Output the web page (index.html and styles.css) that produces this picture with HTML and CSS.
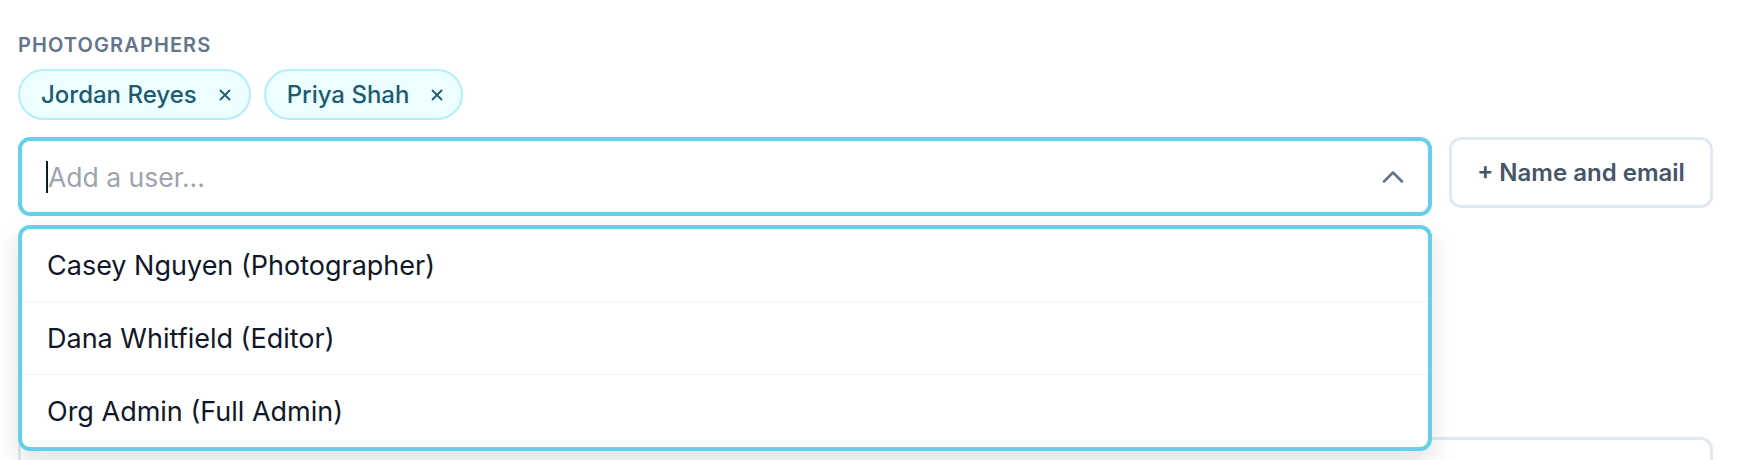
FILE: index.html
```html
<!DOCTYPE html>
<html lang="en">

<head>
    <meta charset="UTF-8">
    <meta name="viewport" content="width=device-width, initial-scale=1.0">
    <title>Photographers</title>
    <link rel="stylesheet" href="styles.css">
</head>

<body>
    <div class="field">
        <div class="label">Photographers</div>

        <div class="chips">
            <span class="chip">Jordan Reyes
                <svg class="chip-x" width="12" height="12" viewBox="0 0 12 12"><path d="M1.5 1.5l9 9M10.5 1.5l-9 9" /></svg>
            </span>
            <span class="chip">Priya Shah
                <svg class="chip-x" width="12" height="12" viewBox="0 0 12 12"><path d="M1.5 1.5l9 9M10.5 1.5l-9 9" /></svg>
            </span>
        </div>

        <div class="row">
            <div class="combo">
                <div class="input">
                    <span class="caret"></span>
                    <span class="placeholder">Add a user...</span>
                    <svg class="chevron" width="24" height="14" viewBox="0 0 24 14"><polyline points="3,11.5 12,2.5 21,11.5" /></svg>
                </div>
                <!-- open list of matching users -->
                <ul class="menu">
                    <li>Casey Nguyen (Photographer)</li>
                    <li>Dana Whitfield (Editor)</li>
                    <li>Org Admin (Full Admin)</li>
                </ul>
            </div>
            <button class="btn">+ Name and email</button>
        </div>

        <div class="box"></div>
    </div>
</body>

</html>
```

FILE: styles.css
```css
* {
    margin: 0;
    padding: 0;
    box-sizing: border-box;
}

body {
    font-family: Inter, "Noto Sans", sans-serif;
    background: #fff;
}

.field {
    width: 1713px;
    padding: 33px 0 0 18px;
}

.label {
    font-size: 20px;
    line-height: 24px;
    font-weight: 600;
    letter-spacing: 0.055em;
    text-transform: uppercase;
    color: #64748b;
    margin-bottom: 12px;
}

.chips {
    display: flex;
    gap: 13px;
    margin-bottom: 17px;
}

.chip {
    display: flex;
    align-items: center;
    gap: 22px;
    height: 51px;
    padding: 0 18px 0 21px;
    border: 2px solid #b4eefa;
    border-radius: 999px;
    background: #ecfeff;
    color: #1e5b70;
    font-size: 24px;
    font-weight: 500;
}

.chip-x {
    fill: none;
    stroke: #1e5b70;
    stroke-width: 1.8;
    stroke-linecap: round;
}

.row {
    display: flex;
    align-items: flex-start;
    gap: 17px;
}

.combo {
    flex: 1;
    position: relative;
}

.input {
    display: flex;
    align-items: center;
    height: 79px;
    padding: 0 23px 0 24px;
    border: 4px solid #64d0ea;
    border-radius: 12px;
    background: #fff;
}

.caret {
    width: 2px;
    height: 32px;
    background: #0f172a;
}

.placeholder {
    flex: 1;
    font-size: 26.5px;
    color: #9ca3af;
}

.chevron {
    fill: none;
    stroke: #64748b;
    stroke-width: 2.6;
    stroke-linecap: round;
    stroke-linejoin: round;
}

.menu {
    list-style: none;
    position: absolute;
    top: calc(100% + 9px);
    left: 0;
    right: 0;
    z-index: 2;
    border: 4px solid #64d0ea;
    border-radius: 12px;
    background: #fff;
    overflow: hidden;
    box-shadow: 0 10px 24px rgba(15, 23, 42, 0.13);
}

.menu li {
    display: flex;
    align-items: center;
    height: 73px;
    padding: 0 25px;
    font-size: 27px;
    color: #0f172a;
    border-top: 1px solid #f1f5f9;
}

.menu li:first-child {
    height: 72px;
    border-top: none;
}

.btn {
    width: 264px;
    height: 71px;
    border: 3px solid #e2e8f0;
    border-radius: 12px;
    background: #fff;
    font-family: inherit;
    font-size: 24px;
    font-weight: 600;
    color: #475569;
    cursor: pointer;
}

.box {
    height: 140px;
    margin-top: 221px;
    border: 3px solid #e2e8f0;
    border-radius: 12px;
}
```
